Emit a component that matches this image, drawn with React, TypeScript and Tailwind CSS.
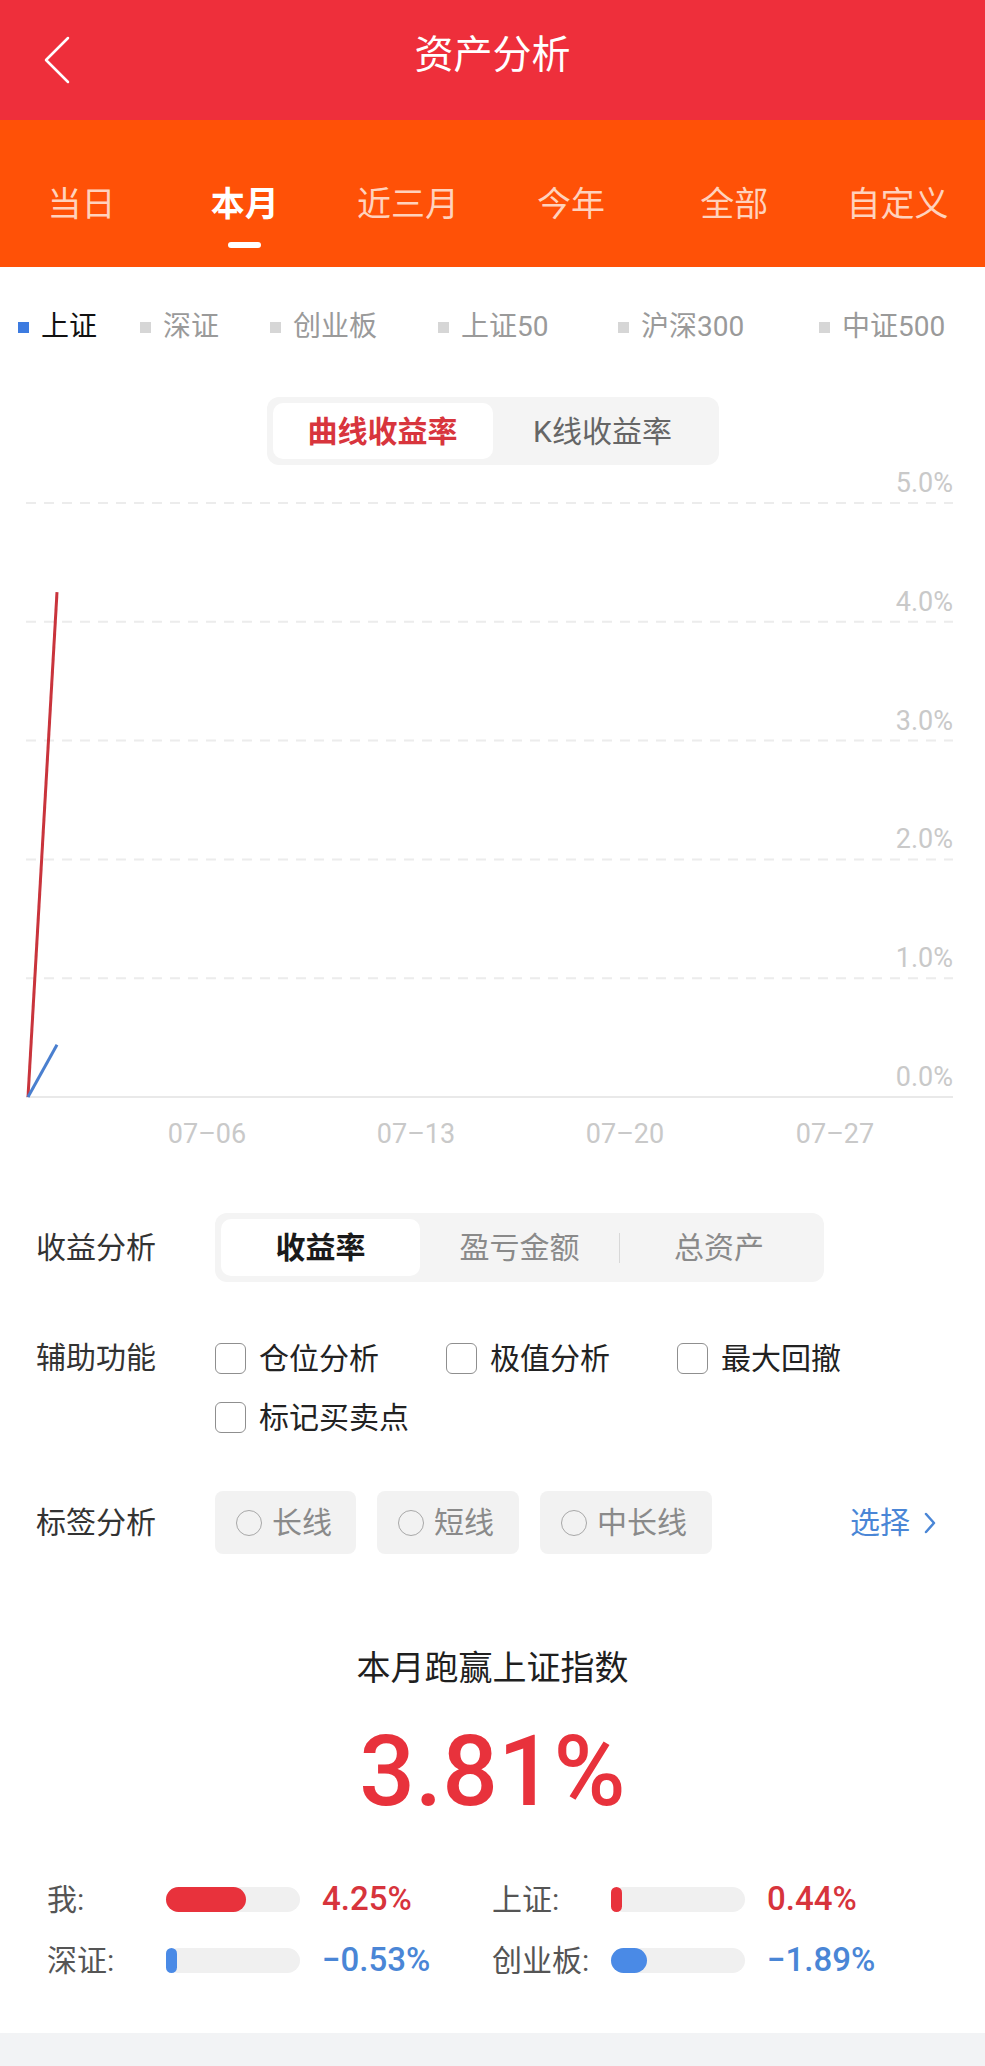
import { useState } from 'react';

const tabs = ['当日', '本月', '近三月', '今年', '全部', '自定义'];

const indices = [
  { name: '上证', active: true },
  { name: '深证', active: false },
  { name: '创业板', active: false },
  { name: '上证50', active: false },
  { name: '沪深300', active: false },
  { name: '中证500', active: false },
];

const tools = ['仓位分析', '极值分析', '最大回撤', '标记买卖点'];

const tags = [
  { label: '长线', width: 'w-[141px]' },
  { label: '短线', width: 'w-[142px]' },
  { label: '中长线', width: 'w-[172px]' },
];

const compare = [
  [
    { label: '我:', fill: 80, value: '4.25%', up: true },
    { label: '上证:', fill: 11, value: '0.44%', up: true },
  ],
  [
    { label: '深证:', fill: 11, value: '−0.53%', up: false },
    { label: '创业板:', fill: 36, value: '−1.89%', up: false },
  ],
];

// chart geometry (svg local coords)
const gridTop = 38;
const gridStep = 118.8;
const yLabels = ['5.0%', '4.0%', '3.0%', '2.0%', '1.0%', '0.0%'];
const xLabels = [
  { x: 207, t: '07–06' },
  { x: 416, t: '07–13' },
  { x: 625, t: '07–20' },
  { x: 835, t: '07–27' },
];

const Chart = () => {
  const zeroY = gridTop + gridStep * 5;
  const toY = (pct: number) => zeroY - pct * gridStep;
  return (
    <svg width={985} height={695} className="block">
      {yLabels.map((l, i) => {
        const y = gridTop + gridStep * i;
        const last = i === yLabels.length - 1;
        return (
          <g key={l}>
            <line
              x1={26}
              x2={953}
              y1={y}
              y2={y}
              stroke={last ? '#e9e9e9' : '#ececec'}
              strokeWidth={2}
              strokeDasharray={last ? undefined : '10 8'}
            />
            <text x={953} y={y - 11} textAnchor="end" fontSize={27} fill="#c9c9c9">
              {l}
            </text>
          </g>
        );
      })}
      {xLabels.map((l) => (
        <text key={l.t} x={l.x} y={678} textAnchor="middle" fontSize={27} fill="#c9c9c9">
          {l.t}
        </text>
      ))}
      <polyline points={`28,${zeroY} 57,${toY(4.25)}`} fill="none" stroke="#c9343c" strokeWidth={3} />
      <polyline points={`28,${zeroY} 57,${toY(0.44)}`} fill="none" stroke="#4a7fcf" strokeWidth={3} />
    </svg>
  );
};

export default function App() {
  const [tab, setTab] = useState(1);
  const [curve, setCurve] = useState(0);
  const [metric, setMetric] = useState(0);

  return (
    <div className="w-full min-h-screen bg-white font-['Roboto','Noto_Sans_CJK_SC',sans-serif]">
      {/* top bar */}
      <div className="h-[120px] bg-[#ee2f3b] grid grid-cols-[1fr_auto_1fr] items-center">
        <button className="pl-[43px] flex items-center">
          <svg width="28" height="48" viewBox="0 0 28 48">
            <polyline points="25,2 3,24 25,46" fill="none" stroke="#fff" strokeWidth="2.5" strokeLinecap="round" strokeLinejoin="round" />
          </svg>
        </button>
        <h1 className="text-white text-[39px] leading-[48px] mb-[10px]">资产分析</h1>
        <div />
      </div>

      {/* period tabs */}
      <div className="h-[147px] bg-[#ff5107] grid grid-cols-6 pr-[6px]">
        {tabs.map((t, i) => (
          <button key={t} onClick={() => setTab(i)} className="flex flex-col items-center pt-[64px]">
            <span className={`text-[34px] leading-[40px] ${i === tab ? 'text-white font-bold' : 'text-[#ffd2bd]'}`}>{t}</span>
            <span className={`mt-[18px] w-[33px] h-[6px] rounded-full ${i === tab ? 'bg-white' : 'bg-transparent'}`} />
          </button>
        ))}
      </div>

      {/* index legend */}
      <div className="mt-[40px] h-[40px] pl-[18px] grid grid-cols-[122px_130px_168px_180px_201px_1fr] items-center">
        {indices.map((x) => (
          <div key={x.name} className="flex items-center gap-[12px]">
            <span className={`w-[11px] h-[11px] ${x.active ? 'bg-[#3d7be0]' : 'bg-[#d6d6d6]'}`} />
            <span className={`text-[28px] leading-[40px] ${x.active ? 'text-[#111]' : 'text-[#9a9a9a]'}`}>{x.name}</span>
          </div>
        ))}
      </div>

      {/* curve type switch */}
      <div className="mt-[50px] mx-auto w-[452px] h-[68px] p-[6px] rounded-[12px] bg-[#f4f4f4] flex">
        {['曲线收益率', 'K线收益率'].map((t, i) => (
          <button
            key={t}
            onClick={() => setCurve(i)}
            className={`h-full flex items-center justify-center rounded-[10px] text-[30px] ${
              i === curve ? 'w-[220px] bg-white text-[#d8353d] font-bold' : 'flex-1 text-[#666]'
            }`}
          >
            {t}
          </button>
        ))}
      </div>

      <Chart />

      {/* yield analysis */}
      <div className="mt-[53px] flex items-center">
        <div className="w-[215px] pl-[36px] text-[30px] text-[#333]">收益分析</div>
        <div className="w-[609px] h-[69px] p-[6px] rounded-[12px] bg-[#f4f4f4] flex items-center">
          {['收益率', '盈亏金额', '总资产'].map((t, i) => (
            <div key={t} className="flex-1 h-full flex items-center">
              {i === 2 && <span className="w-px h-[30px] bg-[#d8d8d8]" />}
              <button
                onClick={() => setMetric(i)}
                className={`flex-1 h-full rounded-[10px] text-[30px] ${
                  i === metric ? 'bg-white text-[#1a1a1a] font-bold' : 'text-[#8a8a8a]'
                }`}
              >
                {t}
              </button>
            </div>
          ))}
        </div>
      </div>

      {/* helper tools */}
      <div className="mt-[58px] flex items-start">
        <div className="w-[215px] pl-[36px] text-[30px] leading-[36px] text-[#333]">辅助功能</div>
        <div className="w-[693px] flex flex-wrap gap-y-[23px]">
          {tools.map((t) => (
            <label key={t} className="w-[231px] flex items-center gap-[13px] h-[36px]">
              <span className="w-[31px] h-[31px] rounded-[6px] border-[1.5px] border-[#8f8f8f]" />
              <span className="text-[30px] text-[#222]">{t}</span>
            </label>
          ))}
        </div>
      </div>

      {/* tag analysis */}
      <div className="mt-[56px] flex items-center">
        <div className="w-[215px] pl-[36px] text-[30px] text-[#333]">标签分析</div>
        <div className="flex gap-[21px]">
          {tags.map((t) => (
            <div key={t.label} className={`${t.width} h-[63px] rounded-[8px] bg-[#f2f2f2] flex items-center pl-[21px] gap-[10px]`}>
              <span className="w-[26px] h-[26px] rounded-full border-[1.5px] border-[#a8a8a8]" />
              <span className="text-[30px] text-[#8a8a8a]">{t.label}</span>
            </div>
          ))}
        </div>
        <button className="ml-auto pr-[49px] flex items-center gap-[14px] text-[30px] text-[#4a86d6]">
          选择
          <svg width="12" height="22" viewBox="0 0 12 22">
            <polyline points="2,2 10,11 2,20" fill="none" stroke="#4a86d6" strokeWidth="2.5" strokeLinecap="round" strokeLinejoin="round" />
          </svg>
        </button>
      </div>

      {/* summary */}
      <div className="mt-[94px] text-center text-[34px] leading-[40px] text-[#1f1f1f]">本月跑赢上证指数</div>
      <div className="mt-[35px] text-center text-[98px] leading-none font-medium text-[#e8323c]">3.81%</div>

      <div className="mt-[58px] pl-[47px] flex flex-col gap-[21px]">
        {compare.map((row, r) => (
          <div key={r} className="grid grid-cols-[445px_1fr]">
            {row.map((c) => (
              <div key={c.label} className="h-[40px] flex items-center">
                <span className="w-[119px] text-[30px] text-[#555]">{c.label}</span>
                <span className="w-[134px] h-[25px] rounded-full bg-[#f0f0f0] flex">
                  <span
                    className={`h-full rounded-full ${c.up ? 'bg-[#e8323c]' : 'bg-[#4a8ae6]'}`}
                    style={{ width: c.fill }}
                  />
                </span>
                <span className={`ml-[22px] text-[33px] font-medium ${c.up ? 'text-[#d7343c]' : 'text-[#4a86d6]'}`}>{c.value}</span>
              </div>
            ))}
          </div>
        ))}
      </div>

      <div className="mt-[53px] h-[33px] bg-[#f2f3f5]" />
    </div>
  );
}
